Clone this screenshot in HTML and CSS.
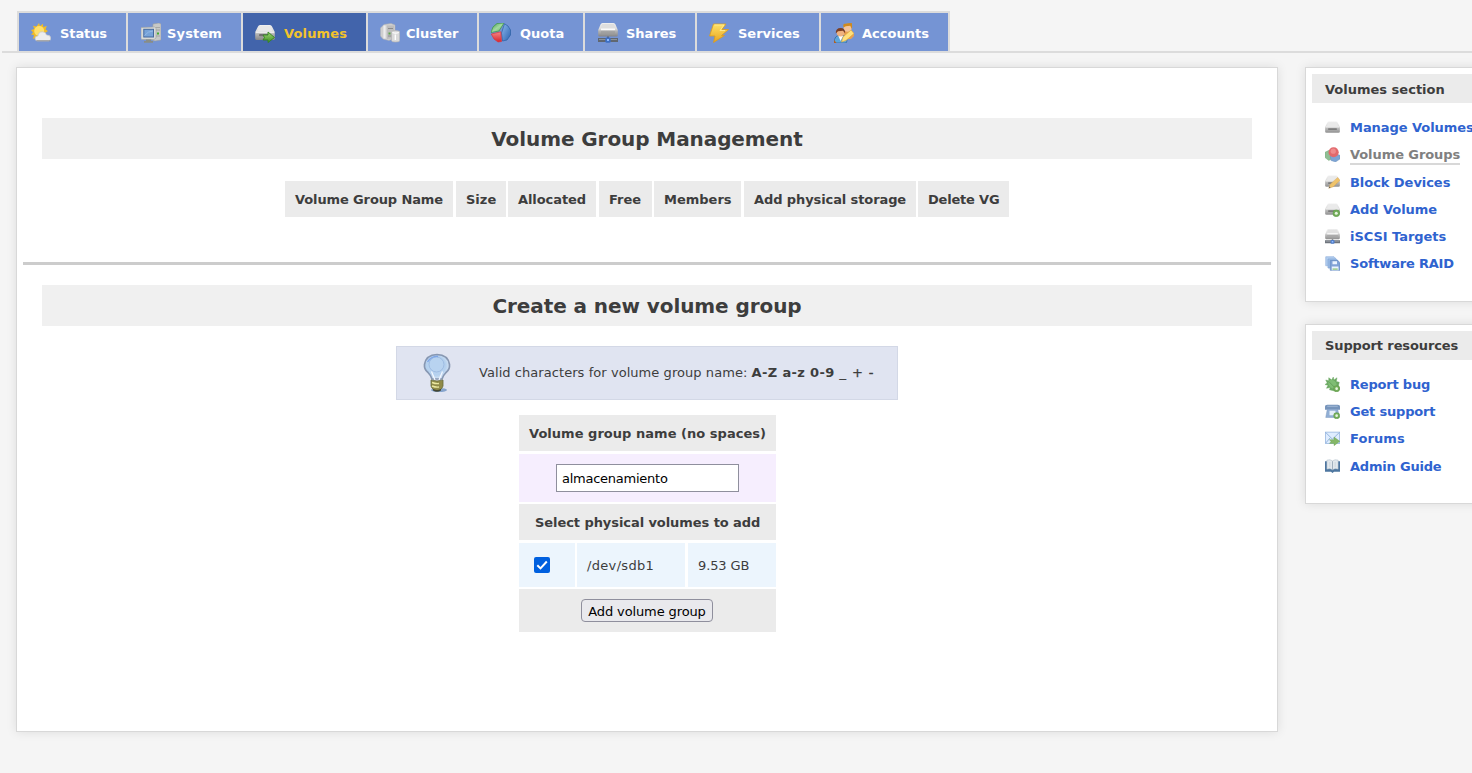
FILE: index.html
```html
<!DOCTYPE html>
<html lang="en">
<head>
<meta charset="utf-8">
<title>Volume Group Management</title>
<link rel="stylesheet" href="styles.css">
</head>
<body>
<svg class="defs" width="0" height="0" aria-hidden="true">
  <defs>
    <linearGradient id="metal" x1="0" y1="0" x2="0" y2="1"><stop offset="0" stop-color="#f0f0f0"/><stop offset=".45" stop-color="#dadada"/><stop offset=".6" stop-color="#b4b4b4"/><stop offset="1" stop-color="#868686"/></linearGradient>
    <linearGradient id="gold" x1="0" y1="0" x2="0" y2="1"><stop offset="0" stop-color="#ffe268"/><stop offset="1" stop-color="#e6a31f"/></linearGradient>
    <linearGradient id="green" x1="0" y1="0" x2="0" y2="1"><stop offset="0" stop-color="#a5d878"/><stop offset="1" stop-color="#3d8e22"/></linearGradient>
    <linearGradient id="leaf" x1="0" y1="0" x2="1" y2="1"><stop offset="0" stop-color="#3f9a4a"/><stop offset=".5" stop-color="#a2d9a0"/><stop offset="1" stop-color="#55ab5a"/></linearGradient>
    <linearGradient id="blue" x1="0" y1="0" x2="1" y2="1"><stop offset="0" stop-color="#8db8ee"/><stop offset="1" stop-color="#2c64b0"/></linearGradient>
    <linearGradient id="red" x1="0" y1="0" x2="0" y2="1"><stop offset="0" stop-color="#f58a86"/><stop offset="1" stop-color="#d8232c"/></linearGradient>
    <radialGradient id="glass" cx=".45" cy=".45" r=".6"><stop offset="0" stop-color="#c2dbf4"/><stop offset=".65" stop-color="#b4d0ee"/><stop offset="1" stop-color="#dde9f6"/></radialGradient>
    <symbol id="drive" viewBox="0 0 20 20">
      <path d="M3 3.500Q3.600 2 5 2H15Q16.400 2 17 3.500L19.800 9V15.500Q19.800 17 18 17H2Q.2 17 .2 15.500V9Z" fill="url(#metal)"/>
      <path d="M4.500 3H15.500L17.300 8H2.700Z" fill="#e8e8e8"/>
      <path d="M1 9.200H19" stroke="#f3f3f3" stroke-width="1.200"/>
      <rect x="4" y="11" width="12" height="2.200" rx="1" fill="#707070"/>
    </symbol>
    <symbol id="netdrive" viewBox="0 0 20 20">
      <path d="M2.500 1.500Q3 0 4.600 0H15.400Q17 0 17.500 1.500L19.800 7V12Q19.800 13.500 18.500 13.500H1.500Q.2 13.500 .2 12V7Z" fill="url(#metal)"/>
      <path d="M4 1H16L17.500 5.500H2.500Z" fill="#dedede"/>
      <path d="M3 6.300H17" stroke="#fafafa" stroke-width="1.600"/>
      <path d="M3 9H17M3 11.200H17" stroke="#989898"/>
      <path d="M9 13.500H11V15H20V19H0V15H9Z" fill="#606770"/>
      <path d="M1 16.500H19" stroke="#8c929b"/>
      <rect x="7.300" y="14.500" width="5.400" height="5.200" rx="1.500" fill="#3d6fc4"/><rect x="9" y="16" width="2" height="2" fill="#8ab8ff"/>
    </symbol>
    <symbol id="plus" viewBox="0 0 8 8"><circle cx="4" cy="4" r="3.700" fill="#64a548" stroke="#4d8a35" stroke-width=".5"/><circle cx="4" cy="4" r="1.600" fill="#e6f3de"/></symbol>
  </defs>
</svg>
<nav class="tabs">
  <a class="tab status"><svg viewBox="0 0 20 20"><path d="M8 0L9 3L12 .8L12.200 4L15.800 3L14.500 6.500L17 8L14 10L8 16L5.500 14L2 16L3 12L0 11.500L2 9.500L0 7L3.300 6L2 2.800L5.500 3.500Z" fill="#f1bc26"/><circle cx="8.200" cy="8" r="5" fill="#ffe06c"/><path d="M6 18Q3.800 17.500 4 15Q4.300 12.800 6.900 13Q7.500 8.800 11.300 8.800Q14.800 8.800 15.500 12Q19.600 11.600 19.700 15.200Q19.700 17.700 17.800 18Z" fill="#ededed" stroke="#c4c4c4" stroke-width=".7"/><path d="M5.500 17.800H19" stroke="#8a8a8a" stroke-width=".9"/></svg><span>Status</span></a>
  <a class="tab system"><svg viewBox="0 0 20 20"><path d="M12 1L18 0L20 1V17L14 18L11 17Z" fill="#c7c9c7" stroke="#989b98" stroke-width=".5"/><path d="M14.500 4.500H19M14.500 7H19M15 13H19" stroke="#9da09d" stroke-width=".8"/><path d="M0 4.500L14 4L15 5V15L13 16.500H1L0 16Z" fill="#d8dad8" stroke="#a0a3a0" stroke-width=".6"/><rect x="2.800" y="6.300" width="9.700" height="7.700" fill="#77a3d9" stroke="#44699f"/><path d="M3.500 12.500Q7 8 12 8" stroke="#93b9e6" fill="none"/><path d="M5 16.500H10V18H12V19.700H3V18H5Z" fill="#888d87"/><rect x="16" y="9.500" width="2" height="2" fill="#43ac32"/></svg><span>System</span></a>
  <a class="tab volumes active"><svg viewBox="0 0 20 20"><use href="#drive"/><path d="M8 12H13V9L19.500 14.500L13 19.500V17H8L9.500 14.500Z" fill="url(#green)" stroke="#348321" stroke-width=".9"/></svg><span>Volumes</span></a>
  <a class="tab cluster"><svg viewBox="0 0 20 20"><path d="M4 1.500L11 .4L15 2V15L9 17.500L3 16L.5 13V5Z" fill="#cfcfcf" stroke="#b0b0b0" stroke-width=".5"/><path d="M4.500 2.500V15.500" stroke="#ededed" stroke-width="2.200"/><path d="M7 2.500H14V15L7 16Z" fill="#bdbdbd"/><path d="M8 5.500H13M8 13H12" stroke="#8c8c8c"/><rect x="8.500" y="9.500" width="2" height="2" fill="#5ba745"/><path d="M11.500 9Q11.500 7.500 15.500 7.500Q19.700 7.500 19.700 9V17.500Q19.700 19 15.500 19Q11.500 19 11.500 17.500Z" fill="#dadada" stroke="#b3b3b3" stroke-width=".7"/><path d="M12.500 9.500Q15.500 10.800 18.700 9.500M15.300 11.500V17" fill="none" stroke="#fff" stroke-width="1.300"/></svg><span>Cluster</span></a>
  <a class="tab quota"><svg viewBox="0 0 20 20"><path d="M13 0L6 .5Q1 3 0 9.500L8 8Z" fill="url(#leaf)" stroke="#3b9543" stroke-width=".7"/><path d="M13.500 .8L17 3L19.500 7V12L16 17L11.500 18L10.500 10Z" fill="url(#blue)" stroke="#2b5fa4" stroke-width=".7"/><path d="M9.800 8.800L.3 11L3 16L7 19L10.500 18.500Z" fill="url(#red)" stroke="#d8353d" stroke-width=".7"/></svg><span>Quota</span></a>
  <a class="tab shares"><svg viewBox="0 0 20 20"><use href="#netdrive"/></svg><span>Shares</span></a>
  <a class="tab services"><svg viewBox="0 0 20 20"><path d="M4.500 1H17L13 6.500H19.500L12.500 12.500H15.500L4.500 19.500L6 13H.5Z" fill="url(#gold)" stroke="#dc9c1c" stroke-width=".8"/><path d="M5.500 2H15L11 7.500H16" fill="none" stroke="#ffef9a" stroke-width=".8"/></svg><span>Services</span></a>
  <a class="tab accounts"><svg viewBox="0 0 20 20"><path d="M8 12Q10 7 15 7Q20 8 20 13L17 16H9Z" fill="#e9a052"/><circle cx="13.700" cy="4.800" r="4" fill="#f4c49b"/><path d="M9.500 4.500Q8.500 0 11.500 .8Q13 0 17.800 0Q18.500 3 17.800 6L16.200 2.800L11.800 3.200Z" fill="#cf8a1e"/><path d="M0 20Q0 12 7 12Q13 12 13 18L12 20Z" fill="#5ea6dc" stroke="#28598c" stroke-width=".6"/><path d="M4.500 13L6.500 18L9 13Z" fill="#fff"/><circle cx="6.500" cy="9.800" r="3.800" fill="#efb280"/><path d="M1.800 10.500Q1.500 5 6.700 5Q11.200 5 11.200 10.500L9 7.800L4 8.300Z" fill="#7b3e23"/><path d="M17 7L20 10.500L12 17.500L7.500 19L9 14Z" fill="#ffe07c" stroke="#dba538" stroke-width=".6"/><path d="M0 17L2.500 20H0Z" fill="#b5601e"/></svg><span>Accounts</span></a>
</nav>
<div class="page">
  <main class="panel main">
    <h2 class="heading">Volume Group Management</h2>
    <div class="row groups">
      <div class="th w-name"><span>Volume Group Name</span></div><div class="th w-size"><span>Size</span></div><div class="th w-alloc"><span>Allocated</span></div><div class="th w-free"><span>Free</span></div><div class="th w-members"><span>Members</span></div><div class="th w-add"><span>Add physical storage</span></div><div class="th w-delete"><span>Delete VG</span></div>
    </div>
    <hr class="rule">
    <h2 class="heading create">Create a new volume group</h2>
    <div class="note">
      <svg viewBox="0 0 30 40"><ellipse cx="17" cy="37" rx="8" ry="2" fill="#86a4cc"/><path d="M10 26Q9 22.500 6 19.500Q2 16.500 2.500 11.500Q4 1.800 15 1.500Q26 1.800 27.500 11.500Q28 16.500 24 19.500Q21 22.500 20 26Z" fill="url(#glass)" stroke="#8797b2" stroke-width="1.700"/><circle cx="14.500" cy="11.500" r="7.500" fill="#b8d3f0" stroke="#9dbbe2"/><path d="M5.500 9Q9.500 3 16 3.500" fill="none" stroke="#7ea5e6" stroke-width="1.300"/><path d="M9.500 18.500L13 27M20.500 18.500L17 27" fill="none" stroke="#f4f8ff" stroke-width="1.200"/><path d="M9 27Q15 29 21 27V33Q19.500 37.500 15 37.500Q10.500 37.500 9 33Z" fill="#8f8a48" stroke="#666b3a" stroke-width=".8"/><path d="M10 29.500Q14 31 17 30.500M10 33Q14 34.500 17 34" fill="none" stroke="#eae7a0" stroke-width="1.500"/><path d="M11 36Q15 38 19 36V37.500Q15 40 11 37.500Z" fill="#454833"/></svg>
      <span class="note-text">Valid characters for volume group name: <b>A-Z a-z 0-9 <span class="symbols">_ + -</span></b></span>
    </div>
    <form class="create-form">
      <div class="th label"><span>Volume group name (no spaces)</span></div>
      <div class="name-cell"><input class="name" type="text" value="almacenamiento"></div>
      <div class="th select"><span>Select physical volumes to add</span></div>
      <div class="row device">
        <div class="td check"><span class="checkbox"><svg viewBox="0 0 16 16"><path d="M3.300 8.200L6.500 11.400L12.800 4.500" fill="none" stroke="#fff" stroke-width="2"/></svg></span></div><div class="td dev"><span>/dev/sdb1</span></div><div class="td capacity"><span>9.53 GB</span></div>
      </div>
      <div class="submit"><button type="button">Add volume group</button></div>
    </form>
  </main>
  <aside class="side">
    <section class="panel box volumes-box">
      <h3>Volumes section</h3>
      <ul>
        <li><svg viewBox="0 0 20 20"><use href="#drive"/></svg><a>Manage Volumes</a></li>
        <li><svg viewBox="0 0 20 20"><path d="M0 7L6 4L9 8V16L5 18L0 14Z" fill="#83b889" stroke="#5a965f" stroke-width=".5"/><path d="M7 12L14 9L20 11V16L14 20L8 18Z" fill="#6f9bd0" stroke="#517bad" stroke-width=".5"/><circle cx="11.500" cy="7" r="6.800" fill="#df595d"/><circle cx="11" cy="5.500" r="3.500" fill="#ee7f80"/></svg><a class="current">Volume Groups</a></li>
        <li><svg viewBox="0 0 20 20"><use href="#drive"/><path d="M17 4.500L20 8.500L11 17L5 19L7 13.500Z" fill="#eebd5a" stroke="#cf9a45" stroke-width=".6"/><path d="M5 19L6 16.500L7.500 18Z" fill="#444"/></svg><a class="low">Block Devices</a></li>
        <li><svg viewBox="0 0 20 20"><use href="#drive"/><use href="#plus" x="10" y="10" width="10" height="10"/></svg><a>Add Volume</a></li>
        <li><svg viewBox="0 0 20 20"><use href="#netdrive"/></svg><a>iSCSI Targets</a></li>
        <li><svg viewBox="0 0 20 20"><path d="M1 1H12L14 3V13H1Z" fill="#a8c8ee" stroke="#8fafdb"/><path d="M4 4H15L17 6V16H4Z" fill="#91b5e5" stroke="#7a9dd0"/><path d="M7 6H17L20 9V19H7Z" fill="#7499d2" stroke="#5a81bc"/><path d="M10 7H16V11H10ZM9 14H18V19H9Z" fill="#eaf3ff"/><path d="M10 17.500H17" stroke="#8fc583" stroke-width="2"/></svg><a class="tight">Software RAID</a></li>
      </ul>
    </section>
    <section class="panel box support-box">
      <h3 class="support-title">Support resources</h3>
      <ul>
        <li><svg viewBox="0 0 20 20"><path d="M1 4L5 5L5 1L9 4L11 0L12 4L16 1L15 6L19 7L18 11L20 16L15 19L10 18L6 17L7 14L2 15L4 11L0 10L3 8Z" fill="#5a9f50" stroke="#5a9f50" stroke-width=".6"/><ellipse cx="10" cy="9.500" rx="5" ry="6.500" transform="rotate(-40 10 9.500)" fill="#72b665"/><path d="M5 6L13 14" stroke="#4a8e42"/><use href="#plus" x="11" y="11" width="9" height="9"/></svg><a class="tight">Report bug</a></li>
        <li><svg viewBox="0 0 20 20"><path d="M0 3Q0 1 3 1H17Q20 1 20 3V7.500H0Z" fill="#6889b4"/><path d="M3 3H17" stroke="#9ab5d6" stroke-width="1.300"/><path d="M3 7H17L19 18H1Z" fill="#86a6d0" stroke="#6c8cb8" stroke-width=".6"/><path d="M6 9H14V15H6Z" fill="#e1edf9"/><use href="#plus" x="11" y="11" width="9" height="9"/></svg><a class="tight">Get support</a></li>
        <li><svg viewBox="0 0 20 20"><rect x=".5" y="1.500" width="19" height="15" fill="#dcecff" stroke="#86aadb"/><path d="M1 2L10 11L19 2M1 16L7 9" fill="none" stroke="#89acd9" stroke-width="1.300"/><path d="M6 11.500H12V8L19.800 13.800L12 19.500V16.500H6L8 14Z" fill="#78b058" stroke="#5a953d" stroke-width=".5"/></svg><a class="wide">Forums</a></li>
        <li><svg viewBox="0 0 20 20"><path d="M0 3H20V17H12L10 18.500L8 17H0Z" fill="#3b6896"/><path d="M2.500 1.500Q7 0 10 2.500Q13 0 17.500 1.500V13.500Q13 12 10 14.500Q7 12 2.500 13.500Z" fill="#dfe6ec" stroke="#98aab7" stroke-width=".6"/><path d="M10 3V14.500" stroke="#7f93a5"/><path d="M6.500 4V11M13.500 4V11" stroke="#c2ccd4"/></svg><a class="tight">Admin Guide</a></li>
      </ul>
    </section>
  </aside>
</div>
</body>
</html>
```

FILE: styles.css
```css
* { box-sizing: border-box; }
body { margin: 0; width: 1472px; height: 773px; overflow: hidden; background: #f5f5f5; color: #3d3d3d; font: 13px/18px Verdana, "DejaVu Sans", sans-serif; }
.defs { display: block; }
svg { flex: none; }
.tabs { display: flex; margin: 11px 0 0 2px; padding-left: 15px; height: 42px; border-bottom: 2px solid #dcdcdc; }
.tab { display: flex; align-items: center; height: 40px; padding: 2px 0 0 12px; border: 2px solid #dcdcdc; border-width: 2px 0 0 2px; background: #7594d4; color: #fff; font-weight: bold; white-space: nowrap; }
.tab span { padding-top: 2px; }
.tab svg { width: 20px; height: 20px; margin-right: 9px; }
.status { width: 109px; }
.status span { letter-spacing: -.1px; }
.system { width: 115px; padding-left: 13px; }
.system svg { margin-right: 6px; }
.system span, .volumes span { letter-spacing: .15px; }
.volumes { width: 125px; }
.cluster { width: 111px; }
.cluster svg { margin-right: 6px; }
.quota { width: 106px; }
.shares { width: 112px; padding-left: 13px; }
.shares svg { margin-right: 8px; }
.services { width: 124px; }
.accounts { width: 131px; border-right-width: 2px; padding-left: 13px; }
.accounts svg { margin-right: 8px; }
.tab.active { background: #4264ab; color: #f3c32b; }
.page { display: flex; align-items: flex-start; padding: 14px 0 0 16px; }
.panel { background: #fff; border: 1px solid #d8d8d8; box-shadow: 0 0 10px rgba(0,0,0,.1); }
.main { width: 1262px; height: 665px; padding: 50px 6px 0; flex: none; }
.heading { height: 41px; margin: 0 19px; background: #f0f0f0; text-align: center; font-size: 20px; line-height: 42px; letter-spacing: -.08px; }
.row { display: flex; }
.groups { margin: 22px 0 0 262px; }
.th { display: flex; align-items: center; height: 36px; padding: 2px 0 0 10px; background: #ebebeb; font-weight: bold; white-space: nowrap; }
.w-name { width: 168px; margin-right: 3px; letter-spacing: -.12px; }
.w-size { width: 50px; margin-right: 2px; }
.w-alloc { width: 88px; margin-right: 3px; letter-spacing: -.08px; }
.w-free { width: 53px; margin-right: 2px; }
.w-members { width: 87px; margin-right: 3px; }
.w-add { width: 172px; margin-right: 2px; letter-spacing: -.1px; }
.w-delete { width: 91px; letter-spacing: -.2px; }
.rule { height: 3px; margin: 45px 0 20px; border: 0; background: #ccc; }
.note { display: flex; align-items: center; width: 502px; height: 54px; margin: 20px 0 0 373px; padding-left: 25px; border: 1px solid #d3d8e6; background: #e0e4f1; white-space: nowrap; }
.note svg { width: 30px; height: 40px; }
.note-text { margin-left: 27px; letter-spacing: .06px; }
.note b { letter-spacing: .35px; }
.symbols { font-weight: normal; letter-spacing: .9px; -webkit-text-stroke: .3px #3d3d3d; }
.create-form { width: 257px; margin: 15px 0 0 496px; }
.label { letter-spacing: .03px; }
.name-cell { height: 48px; margin: 3px 0 2px; padding: 10px 37px; background: #f6eefe; }
.name { display: block; width: 183px; height: 28px; margin: 0; padding: 1px 5px; border: 1px solid #8f8f9d; background: #fff; color: #000; font: 13px Verdana, "DejaVu Sans", sans-serif; letter-spacing: -.25px; }
.select { padding-left: 16px; letter-spacing: -.07px; }
.device { margin: 3px 0 2px; }
.td { display: flex; align-items: center; height: 44px; padding-left: 10px; background: #ecf5fd; white-space: nowrap; }
.td > span:not(.checkbox) { padding-top: 2px; }
.check { width: 56px; margin-right: 2px; padding-left: 15px; }
.dev { width: 108px; margin-right: 3px; letter-spacing: .33px; }
.capacity { width: 88px; letter-spacing: -.12px; }
.checkbox { width: 16px; height: 16px; border-radius: 2px; background: #0060df; }
.checkbox svg { display: block; width: 16px; height: 16px; }
.submit { height: 43px; padding: 10px 62px; background: #ebebeb; }
button { display: block; width: 132px; height: 23px; margin: 0; padding: 2px 0 0; border: 1px solid #8f8f9d; border-radius: 4px; background: #e9e9ed; color: #000; font: 13px Verdana, "DejaVu Sans", sans-serif; letter-spacing: -.12px; white-space: nowrap; }
.side { width: 167px; margin-left: 27px; overflow: visible; flex: none; }
.box { width: 220px; padding: 6px; }
.volumes-box { height: 235px; margin-bottom: 22px; }
.support-box { height: 180px; }
h3 { height: 29px; margin: 0 0 11px; padding-left: 13px; background: #ebebeb; font-size: 13px; line-height: 31px; white-space: nowrap; }
.support-title { line-height: 30px; letter-spacing: -.12px; }
ul { margin: 0; padding: 0 0 0 13px; list-style: none; }
li { display: flex; align-items: center; height: 27.200px; white-space: nowrap; }
li svg { width: 15px; height: 15px; margin-right: 10px; opacity: .9; }
li a { color: #2f63cf; font-weight: bold; line-height: 17px; letter-spacing: -.05px; }
li .current { padding-top: 1px; color: #808080; border-bottom: 2px solid #d8d8d8; line-height: 16px; padding-top: 2px; letter-spacing: -.08px; }
li .low { padding-top: 1px; }
li .tight { letter-spacing: -.2px; }
li .wide { letter-spacing: .1px; }
```
